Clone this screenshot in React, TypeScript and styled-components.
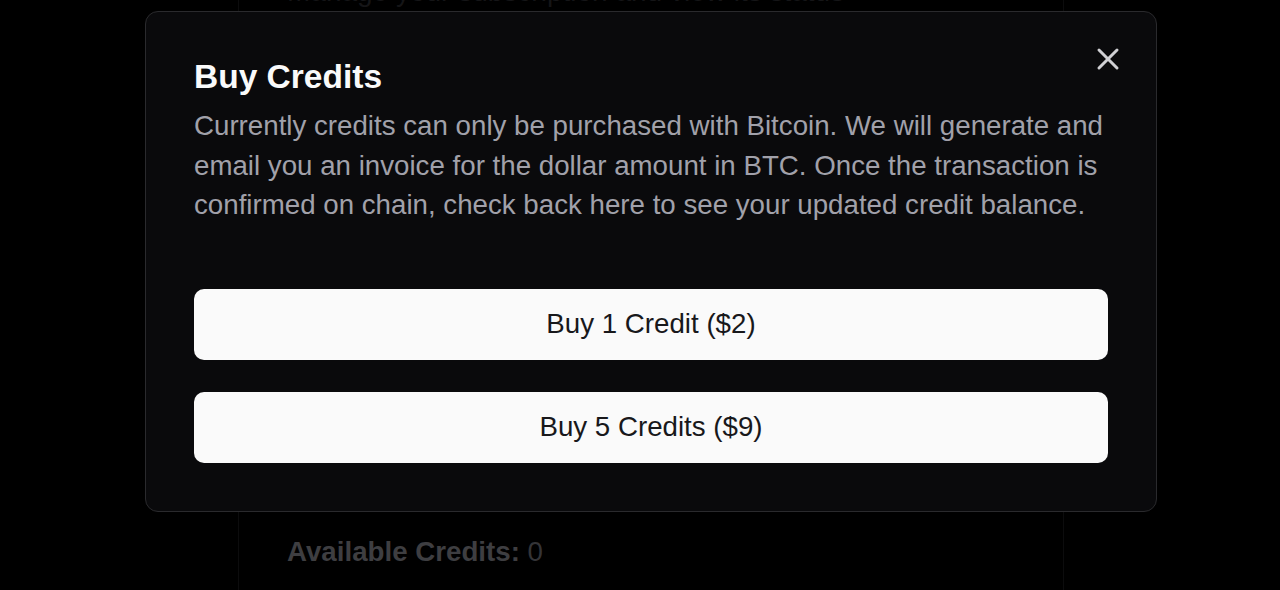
import React from "react";
import styled, { createGlobalStyle } from "styled-components";
import { X } from "lucide-react";

const Global = createGlobalStyle`
  html, body {
    margin: 0;
    padding: 0;
    background: #000;
    height: 100%;
    overflow: hidden;
  }
  body {
    font-family: "Liberation Sans", Arial, Helvetica, sans-serif;
    -webkit-font-smoothing: antialiased;
  }
  * { box-sizing: border-box; }
`;

const Page = styled.div`
  width: 1280px;
  height: 590px;
  background: #000;
  display: flex;
  padding-left: 238px;
`;

const Panel = styled.section`
  width: 826px;
  height: 100%;
  border-left: 1px solid #0c0c0d;
  border-right: 1px solid #0c0c0d;
  padding: 0 48px;
  display: flex;
  flex-direction: column;
`;

const FadedLine = styled.p`
  margin: -28px 0 0;
  font-size: 28px;
  line-height: 40px;
  color: #151517;
  white-space: nowrap;
`;

const BalanceRow = styled.p`
  margin: 520px 0 0;
  font-size: 27.7px;
  line-height: 40px;
  color: #343437;
`;

const BalanceLabel = styled.strong`
  font-weight: 700;
  color: #3e3e41;
`;

const Overlay = styled.div`
  position: fixed;
  inset: 0;
  background: transparent;
  display: flex;
  align-items: flex-start;
  justify-content: flex-start;
  padding: 11px 0 0 145px;
`;

const Dialog = styled.div`
  position: relative;
  width: 1012px;
  background: #0a0a0c;
  border: 1px solid #2a2a2d;
  border-radius: 13px;
  padding: 45px 48px 48px;
  display: flex;
  flex-direction: column;
`;

const Title = styled.h2`
  margin: 0;
  font-size: 33.5px;
  line-height: 40px;
  font-weight: 700;
  color: #fafafa;
`;

const Description = styled.p`
  margin: 9px 0 0;
  font-size: 27.7px;
  line-height: 39.5px;
  color: #a1a1aa;
`;

const Actions = styled.div`
  margin-top: 64px;
  display: flex;
  flex-direction: column;
  gap: 32px;
`;

const BuyButton = styled.button`
  height: 71px;
  width: 100%;
  border: none;
  border-radius: 10px;
  background: #fafafa;
  color: #18181b;
  font-family: "Liberation Sans", Arial, Helvetica, sans-serif;
  font-size: 27.7px;
  cursor: pointer;
`;

const CloseButton = styled.button`
  position: absolute;
  top: 29px;
  right: 30px;
  width: 36px;
  height: 36px;
  padding: 0;
  border: none;
  background: transparent;
  color: #d0d0d4;
  display: flex;
  align-items: center;
  justify-content: center;
  cursor: pointer;
`;

export default function App() {
  return (
    <>
      <Global />
      <Page>
        <Panel>
          <FadedLine>Manage your subscription and view its status</FadedLine>
          <BalanceRow>
            <BalanceLabel>Available Credits:</BalanceLabel> 0
          </BalanceRow>
        </Panel>
      </Page>
      <Overlay>
        <Dialog role="dialog">
          <Title>Buy Credits</Title>
          <Description>
            Currently credits can only be purchased with Bitcoin. We will generate and
            email you an invoice for the dollar amount in BTC. Once the transaction is
            confirmed on chain, check back here to see your updated credit balance.
          </Description>
          <Actions>
            <BuyButton>Buy 1 Credit ($2)</BuyButton>
            <BuyButton>Buy 5 Credits ($9)</BuyButton>
          </Actions>
          <CloseButton aria-label="Close">
            <X size={36} strokeWidth={2} />
          </CloseButton>
        </Dialog>
      </Overlay>
    </>
  );
}
